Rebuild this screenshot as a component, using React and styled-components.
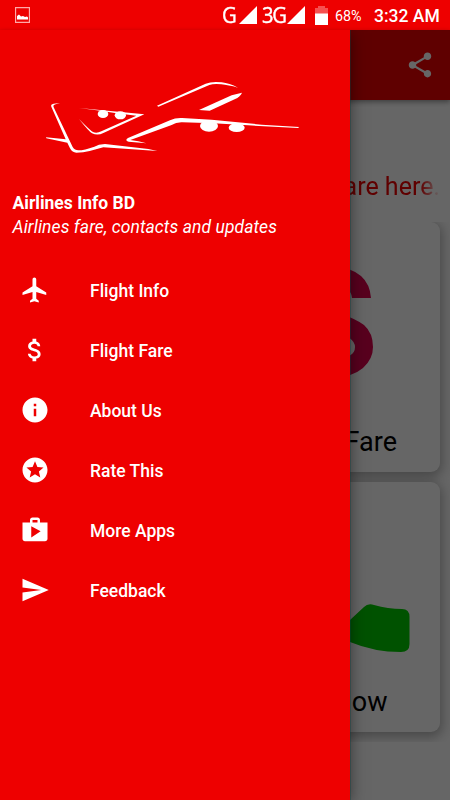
import React from "react";
import styled, { createGlobalStyle } from "styled-components";

const Global = createGlobalStyle`
  * { box-sizing: border-box; }
  body { margin: 0; font-family: Roboto, sans-serif; }
`;

const Screen = styled.div`
  position: relative;
  width: 450px;
  height: 800px;
  overflow: hidden;
  display: flex;
  flex-direction: column;
  background: #fff;
`;

const StatusBar = styled.header`
  height: 30px;
  flex: none;
  display: flex;
  align-items: center;
  background: #ee0000;
  color: #fff;
  padding: 0 10px 0 15px;
  white-space: nowrap;
`;

const StatusRight = styled.div`
  margin-left: auto;
  display: flex;
  align-items: center;
`;

const Network = styled.span`
  font-family: "Open Sans", sans-serif;
  font-size: 22px;
  line-height: 28px;
  padding-bottom: 2px;
  letter-spacing: ${(p) => p.$tight || 0}px;
  width: ${(p) => p.$w}px;
  transform: scaleX(0.92);
  transform-origin: left;
  -webkit-text-stroke: 0.4px #fff;
`;

const StatusIcon = styled.svg`
  display: block;
  flex: none;
  margin-right: ${(p) => p.$gap || 0}px;
`;

const Percent = styled.span`
  font-size: 14.3px;
  line-height: 30px;
  width: 39px;
  padding-top: 1px;
`;

const Clock = styled.span`
  font-size: 17.5px;
  font-weight: 500;
  line-height: 30px;
  width: 66px;
  padding-top: 1px;
`;

const Page = styled.main`
  flex: 1;
  display: flex;
  flex-direction: column;
`;

const Toolbar = styled.div`
  height: 70px;
  flex: none;
  display: flex;
  align-items: center;
  justify-content: flex-end;
  padding-right: 15px;
  background: #ee0000;
  box-shadow: 0 2px 5px rgba(0, 0, 0, 0.4);
`;

const Marquee = styled.p`
  margin: 70px 10px 0;
  height: 52px;
  line-height: 33px;
  font-size: 25px;
  text-align: right;
  white-space: nowrap;
  color: #ee0000;
  mask-image: linear-gradient(to right, #000 calc(100% - 20px), transparent);
`;

const Grid = styled.div`
  height: 520px;
  display: grid;
  grid-template-columns: 210px 210px;
  grid-auto-rows: 250px;
  gap: 10px;
  padding: 0 10px;
  overflow: hidden;
`;

const Card = styled.section`
  display: flex;
  flex-direction: column;
  align-items: center;
  background: #fff;
  border-radius: 9px;
  box-shadow: 0 3px 12px 2px rgba(0, 0, 0, 0.3);
`;

const CardArt = styled.svg`
  display: block;
  flex: none;
  width: 210px;
  height: 200px;
`;

const CardLabel = styled.span`
  font-size: 27px;
  line-height: 40px;
  padding-right: 2px;
  color: #000;
`;

const Scrim = styled.div`
  position: absolute;
  inset: 30px 0 0;
  background: rgba(0, 0, 0, 0.6);
`;

const Drawer = styled.aside`
  position: absolute;
  top: 30px;
  bottom: 0;
  left: 0;
  width: 350px;
  background: #ee0000;
  color: #fff;
  box-shadow: 1px 0 0 rgba(10, 70, 70, 0.35), 0 3px 15px rgba(0, 0, 0, 0.5);
  clip-path: inset(0 -30px 0 0);
`;

const Logo = styled.svg`
  display: block;
  width: 270px;
  height: 95px;
  margin: 40px 0 26px 35px;
`;

const AppName = styled.h1`
  margin: 0 0 0 12.5px;
  font-size: 17.5px;
  line-height: 24px;
  font-weight: 700;
`;

const Tagline = styled.p`
  margin: 0 0 0 12.5px;
  font-size: 17.5px;
  line-height: 24px;
  letter-spacing: 0.08px;
  font-style: italic;
  white-space: nowrap;
`;

const Menu = styled.nav`
  display: flex;
  flex-direction: column;
  margin-top: 21px;
`;

const MenuItem = styled.a`
  height: 60px;
  display: flex;
  align-items: center;
  padding-left: 20px;
  font-size: 17.5px;
  font-weight: 500;
`;

const MenuIcon = styled.svg`
  width: 30px;
  height: 30px;
  margin-right: 40px;
  fill: #fff;
`;

const MenuLabel = styled.span`
  padding-top: 2px;
`;

const items = [
  ["Flight Info", "M21 16v-2l-8-5V3.500c0-.83-.67-1.500-1.500-1.500S10 2.670 10 3.500V9l-8 5v2l8-2.500V19l-2 1.500V22l3.500-1 3.500 1v-1.500L13 19v-5.500l8 2.500z"],
  ["Flight Fare", "M11.800 10.900c-2.270-.59-3-1.200-3-2.150 0-1.090 1.010-1.850 2.700-1.850 1.780 0 2.440.85 2.500 2.100h2.210c-.07-1.720-1.120-3.300-3.210-3.810V3h-3v2.160c-1.940.42-3.500 1.680-3.500 3.610 0 2.310 1.910 3.460 4.700 4.130 2.500.6 3 1.480 3 2.410 0 .69-.49 1.790-2.700 1.790-2.060 0-2.870-.92-2.980-2.100h-2.200c.12 2.190 1.760 3.420 3.680 3.830V21h3v-2.150c1.950-.37 3.500-1.500 3.500-3.550 0-2.840-2.430-3.810-4.700-4.400z"],
  ["About Us", "M12 2C6.480 2 2 6.480 2 12s4.480 10 10 10 10-4.480 10-10S17.520 2 12 2zm1 15h-2v-6h2v6zm0-8h-2V7h2v2z"],
  ["Rate This", "M11.990 2C6.470 2 2 6.480 2 12s4.470 10 9.990 10C17.520 22 22 17.520 22 12S17.520 2 11.990 2zm4.240 16L12 15.450 7.770 18l1.120-4.810-3.730-3.230 4.920-.42L12 5l1.920 4.530 4.920.42-3.730 3.230L16.230 18z"],
  ["More Apps", "M16 6V4c0-1.110-.89-2-2-2h-4c-1.110 0-2 .89-2 2v2H2v13c0 1.110.89 2 2 2h16c1.110 0 2-.89 2-2V6h-6zm-6-2h4v2h-4V4zM9 18V9l7.500 4L9 18z"],
  ["Feedback", "M2.010 21L23 12 2.010 3 2 10l15 2-15 2z"],
];

const Signal = ({ gap }) => (
  <StatusIcon width="18" height="18" viewBox="0 0 18 18" $gap={gap}>
    <path d="M0 18L18 0V18Z" fill="#fff" />
  </StatusIcon>
);

const PlaneLogo = () => (
  <Logo viewBox="0 0 810 285" fill="#fff">
    <path d="M75 99L56 101Q46 103 49 110L92 208L33 202L34 205L97 218L105 235Q112 248 124 248Q145 248 164 243L205 232L367 243L340 237L210 222Q190 223 178 230Q148 241 130 241Q119 241 113 231L56 112Q53 105 62 103Z" />
    <path d="M132 114L328 133L205 189Q188 198 171 190Q163 186 132 147Q166 182 174 186Q185 191 199 184L304 137L240 129L185 121Z" />
    <ellipse cx="204" cy="132" rx="16" ry="12" />
    <ellipse cx="256" cy="136" rx="17" ry="12" />
    <path d="M366 107L512 41Q529 34 560 37Q583 40 609 53Q579 45 559 43Q535 41 523 45L370 110Z" />
    <path d="M492 120L590 76L621 68Q617 79 599 88L524 122Z" />
    <path d="M334 220L281 215Q268 211 279 204L405 151Q421 143 441 144L530 149L680 164L793 171L789 174L640 166L535 160L442 157Q425 156 408 166L286 210L310 214Z" />
    <ellipse cx="522" cy="168" rx="27" ry="17" />
    <ellipse cx="605" cy="173" rx="24" ry="13" />
  </Logo>
);

export default function App() {
  return (
    <Screen>
      <Global />
      <StatusBar>
        <StatusIcon width="15" height="16" viewBox="0 0 15 16">
          <path d="M.5.5H14.500V15.500H.5Z" fill="none" stroke="#ffa8a8" strokeWidth="1.3" />
          <path d="M2 12.500V9L4 7.500L6 9.500L8 9L10 10L12 9.500L13 10.500V12.500Z" fill="#fff" />
        </StatusIcon>
        <StatusRight>
          <Network $w={17}>G</Network>
          <Signal gap={5} />
          <Network $w={25} $tight={-1.4}>3G</Network>
          <Signal gap={10} />
          <StatusIcon width="13" height="19" viewBox="0 0 13 19" $gap={7}>
            <path d="M3 0H10V2H13V8H0V2H3Z" fill="#f65050" />
            <path d="M0 7.500H13V19H0Z" fill="#fff" />
          </StatusIcon>
          <Percent>68%</Percent>
          <Clock>3:32 AM</Clock>
        </StatusRight>
      </StatusBar>
      <Page>
        <Toolbar>
          <StatusIcon width="30" height="30" viewBox="0 0 24 24" fill="#fff">
            <path d="M18 16.080c-.76 0-1.440.3-1.960.77L8.910 12.700c.05-.23.09-.46.09-.7s-.04-.47-.09-.7l7.050-4.110c.54.5 1.250.81 2.040.81 1.660 0 3-1.340 3-3s-1.340-3-3-3-3 1.340-3 3c0 .24.04.47.09.7L8.040 9.810C7.500 9.310 6.790 9 6 9c-1.660 0-3 1.340-3 3s1.340 3 3 3c.79 0 1.500-.31 2.040-.81l7.120 4.160c-.05.21-.08.43-.08.65 0 1.610 1.310 2.920 2.920 2.920s2.920-1.310 2.920-2.920-1.310-2.920-2.920-2.920z" />
          </StatusIcon>
        </Toolbar>
        <Marquee>Flight fare here.</Marquee>
        <Grid>
          <Card />
          <Card>
            <CardArt viewBox="230 222 210 200">
              <path d="M371 298Q370 284 361 276Q350 267 335 267Q316 267 306 277Q298 286 298 298Q298 321 333 331Q355 337 355 347Q355 358 336 358Q318 358 317 343H297Q297 362 311 371Q321 377 336 377Q352 377 363 368Q373 359 373 347Q373 333 364 325Q356 319 341 314Q317 307 317 298Q317 286 334 286Q351 286 352 298Z" fill="#db004d" />
            </CardArt>
            <CardLabel>Flight Fare</CardLabel>
          </Card>
          <Card />
          <Card>
            <CardArt viewBox="230 482 210 200">
              <path d="M350 620L364 607Q368 603 374 605Q388 609 402 609Q409.500 609 409.500 617V644Q409.500 652 401 652Q374 652 350 642L325 628Z" fill="#00cc00" />
            </CardArt>
            <CardLabel>Call Now</CardLabel>
          </Card>
        </Grid>
      </Page>
      <Scrim />
      <Drawer>
        <PlaneLogo />
        <AppName>Airlines Info BD</AppName>
        <Tagline>Airlines fare, contacts and updates</Tagline>
        <Menu>
          {items.map(([label, d]) => (
            <MenuItem key={label}>
              <MenuIcon viewBox="0 0 24 24"><path d={d} /></MenuIcon>
              <MenuLabel>{label}</MenuLabel>
            </MenuItem>
          ))}
        </Menu>
      </Drawer>
    </Screen>
  );
}
